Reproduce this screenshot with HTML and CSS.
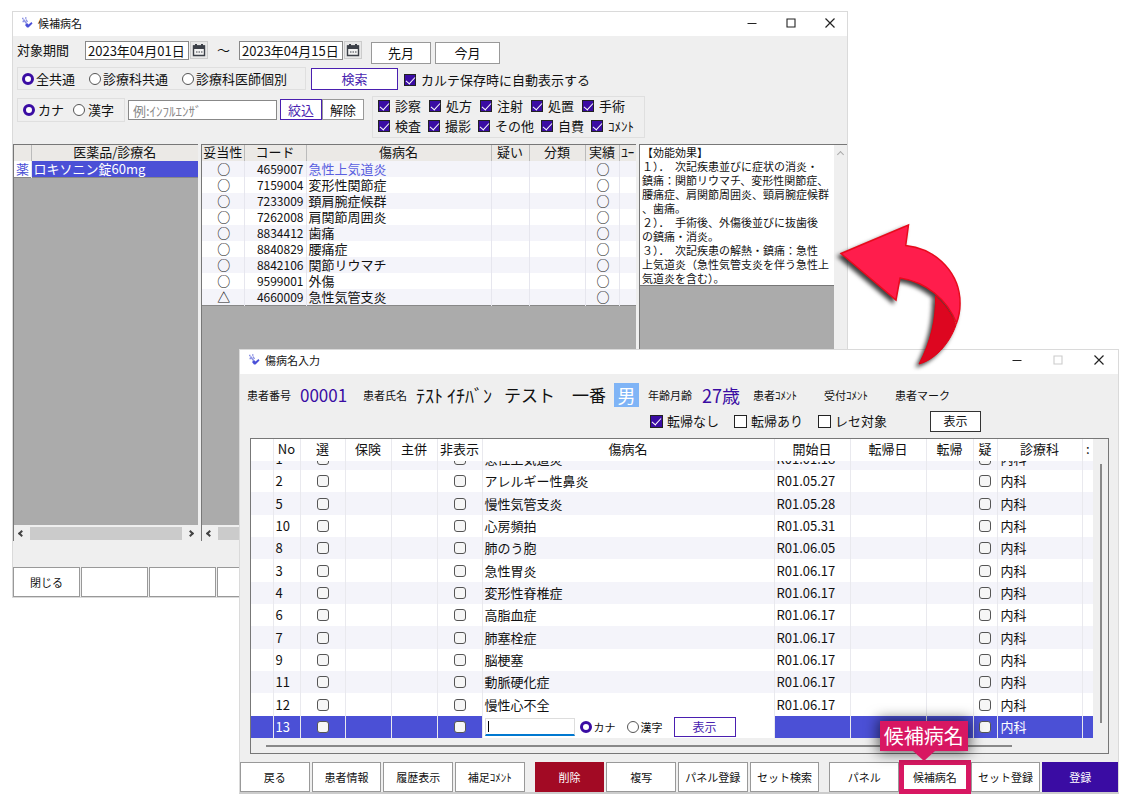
FILE: index.html
```html
<!DOCTYPE html>
<html lang="ja">
<head>
<meta charset="utf-8">
<meta name="viewport" content="width=device-width, initial-scale=1">
<title>候補病名</title>
<link rel="stylesheet" href="styles.css">
</head>
<body>
<svg class="defs" aria-hidden="true">
  <symbol id="app" viewBox="0 0 12 12"><path d="M1 1.500h1.500M4 1h1.500M1.500 4.500h1.500M2.500 2.500l3 4M5 2.500l1.500 2.500" stroke="#8c92e4" stroke-width="1.400" fill="none"/><path d="M4 8l2-2 1.500 1.500L10.500 5 11.500 6.500 7.500 10.500 6 10.500z" fill="#4a50d8"/></symbol>
  <symbol id="cal" viewBox="0 0 14 14"><path d="M1.500 3h11v9.500h-11z" fill="#f2f2f2" stroke="#3c4048" stroke-width="1.400"/><path d="M1 2.500h12V6H1zM3 1h2v2H3zM9 1h2v2H9z" fill="#3c4048"/><path d="M4 9h1.500M6.500 9H8M9 9h1.500" stroke="#3c4048" stroke-width="1.200"/></symbol>
  <symbol id="min" viewBox="0 0 10 10"><path d="M0.500 5.500h9" stroke="currentColor"/></symbol>
  <symbol id="max" viewBox="0 0 10 10"><path d="M1 1h8v8H1z" fill="none" stroke="currentColor" stroke-width="1.100"/></symbol>
  <symbol id="close" viewBox="0 0 10 10"><path d="M0.500 0.500l9 9M9.500 0.500l-9 9" stroke="currentColor" stroke-width="1.200"/></symbol>
</svg>

<main class="desktop">
  <section class="window candidates">
    <header class="titlebar">
      <svg class="app-icon"><use href="#app"/></svg>
      <h1>候補病名</h1>
      <button class="win-btn" aria-label="最小化"><svg><use href="#min"/></svg></button>
      <button class="win-btn" aria-label="最大化"><svg><use href="#max"/></svg></button>
      <button class="win-btn" aria-label="閉じる"><svg><use href="#close"/></svg></button>
    </header>

    <form class="filters">
      <div class="line period">
        <label for="from">対象期間</label>
        <input class="field date" id="from" type="text" value="2023年04月01日">
        <button class="cal" type="button" aria-label="開始日を選択"><svg><use href="#cal"/></svg></button>
        <span class="tilde">～</span>
        <input class="field date" type="text" value="2023年04月15日" aria-label="終了日">
        <button class="cal" type="button" aria-label="終了日を選択"><svg><use href="#cal"/></svg></button>
        <button class="btn month first" type="button">先月</button>
        <button class="btn month" type="button">今月</button>
      </div>
      <div class="line scope">
        <div class="group scope-group">
          <label><input type="radio" name="scope" checked>全共通</label>
          <label><input type="radio" name="scope">診療科共通</label>
          <label><input type="radio" name="scope">診療科医師個別</label>
        </div>
        <button class="btn accent search" type="button">検索</button>
        <label><input type="checkbox" checked>カルテ保存時に自動表示する</label>
      </div>
      <div class="line narrow">
        <div class="group kana-group">
          <label><input type="radio" name="kana" checked>カナ</label>
          <label><input type="radio" name="kana">漢字</label>
        </div>
        <input class="field keyword" type="text" placeholder="例:ｲﾝﾌﾙｴﾝｻﾞ" aria-label="キーワード">
        <button class="btn accent small" type="button">絞込</button>
        <button class="btn small" type="button">解除</button>
        <div class="group kinds">
          <div class="kinds-row">
            <label><input type="checkbox" checked>診察</label>
            <label><input type="checkbox" checked>処方</label>
            <label><input type="checkbox" checked>注射</label>
            <label><input type="checkbox" checked>処置</label>
            <label><input type="checkbox" checked>手術</label>
          </div>
          <div class="kinds-row">
            <label><input type="checkbox" checked>検査</label>
            <label><input type="checkbox" checked>撮影</label>
            <label><input type="checkbox" checked>その他</label>
            <label><input type="checkbox" checked>自費</label>
            <label><input type="checkbox" checked>ｺﾒﾝﾄ</label>
          </div>
        </div>
      </div>
    </form>

    <div class="panes">
      <div class="pane drugs">
        <table class="list">
          <colgroup><col class="w-mark"><col></colgroup>
          <thead><tr><th></th><th>医薬品/診療名</th></tr></thead>
          <tbody><tr class="picked"><td class="mark">薬</td><td>ロキソニン錠60mg</td></tr></tbody>
        </table>
        <div class="hbar"><span class="chev left"></span><span class="thumb"></span><span class="chev right"></span></div>
      </div>
      <div class="pane names">
        <table class="list">
          <colgroup><col class="w-fit"><col class="w-code"><col><col class="w-doubt"><col class="w-class"><col class="w-done"><col class="w-user"></colgroup>
          <thead><tr><th>妥当性</th><th>コード</th><th>傷病名</th><th>疑い</th><th>分類</th><th>実績</th><th class="cut">ﾕｰ</th></tr></thead>
          <tbody>
            <tr><td>○</td><td>4659007</td><td class="link">急性上気道炎</td><td></td><td></td><td>○</td><td></td></tr>
            <tr><td>○</td><td>7159004</td><td>変形性関節症</td><td></td><td></td><td>○</td><td></td></tr>
            <tr><td>○</td><td>7233009</td><td>頚肩腕症候群</td><td></td><td></td><td>○</td><td></td></tr>
            <tr><td>○</td><td>7262008</td><td>肩関節周囲炎</td><td></td><td></td><td>○</td><td></td></tr>
            <tr><td>○</td><td>8834412</td><td>歯痛</td><td></td><td></td><td>○</td><td></td></tr>
            <tr><td>○</td><td>8840829</td><td>腰痛症</td><td></td><td></td><td>○</td><td></td></tr>
            <tr><td>○</td><td>8842106</td><td>関節リウマチ</td><td></td><td></td><td>○</td><td></td></tr>
            <tr><td>○</td><td>9599001</td><td>外傷</td><td></td><td></td><td>○</td><td></td></tr>
            <tr><td>△</td><td>4660009</td><td>急性気管支炎</td><td></td><td></td><td>○</td><td></td></tr>
          </tbody>
        </table>
        <div class="hbar"><span class="chev left"></span><span class="thumb"></span><span class="chev right"></span></div>
      </div>
      <div class="pane effects">
        <div class="effects-body">
          <p>【効能効果】<br>１）．　次記疾患並びに症状の消炎・<br>鎮痛：関節リウマチ、変形性関節症、<br>腰痛症、肩関節周囲炎、頸肩腕症候群<br>、歯痛。<br>２）．　手術後、外傷後並びに抜歯後<br>の鎮痛・消炎。<br>３）．　次記疾患の解熱・鎮痛：急性<br>上気道炎（急性気管支炎を伴う急性上<br>気道炎を含む）。</p>
        </div>
        <div class="vbar"><span class="chev up"></span></div>
      </div>
    </div>

    <footer class="actions back">
      <button class="btn">閉じる</button>
      <button class="btn" aria-label="未設定1"></button>
      <button class="btn" aria-label="未設定2"></button>
      <button class="btn" aria-label="未設定3"></button>
    </footer>
  </section>

  <section class="window entry">
    <header class="titlebar">
      <svg class="app-icon"><use href="#app"/></svg>
      <h1>傷病名入力</h1>
      <button class="win-btn" aria-label="最小化"><svg><use href="#min"/></svg></button>
      <button class="win-btn" aria-label="最大化" disabled><svg><use href="#max"/></svg></button>
      <button class="win-btn" aria-label="閉じる"><svg><use href="#close"/></svg></button>
    </header>

    <div class="patient">
      <span>患者番号</span><strong class="number">00001</strong>
      <span>患者氏名</span><span class="name kana">ﾃｽﾄ ｲﾁﾊﾞﾝ</span><span class="name">テスト　一番</span>
      <span class="sex">男</span>
      <span>年齢月齢</span><strong class="age">27歳</strong>
      <span class="note">患者ｺﾒﾝﾄ</span><span class="note">受付ｺﾒﾝﾄ</span><span class="note">患者マーク</span>
    </div>
    <div class="outcome">
      <label><input type="checkbox" checked>転帰なし</label>
      <label><input type="checkbox">転帰あり</label>
      <label><input type="checkbox">レセ対象</label>
      <button class="btn show">表示</button>
    </div>

    <div class="grid-frame">
      <div class="grid-main">
        <table class="grid">
          <colgroup><col class="c-edge"><col class="c-no"><col class="c-box"><col class="c-mid"><col class="c-mid"><col class="c-box"><col><col class="c-date"><col class="c-date"><col class="c-end"><col class="c-doubt"><col class="c-dept"><col class="c-last"></colgroup>
          <thead><tr><th></th><th>No</th><th>選</th><th>保険</th><th>主併</th><th>非表示</th><th>傷病名</th><th>開始日</th><th>転帰日</th><th>転帰</th><th>疑</th><th>診療科</th><th>:</th></tr></thead>
        </table>
        <div class="grid-rows">
          <table class="grid">
            <colgroup><col class="c-edge"><col class="c-no"><col class="c-box"><col class="c-mid"><col class="c-mid"><col class="c-box"><col><col class="c-date"><col class="c-date"><col class="c-end"><col class="c-doubt"><col class="c-dept"><col class="c-last"></colgroup>
            <tbody>
              <tr><td></td><td>1</td><td><input type="checkbox" aria-label="選"></td><td></td><td></td><td><input type="checkbox" aria-label="非表示"></td><td>急性上気道炎</td><td>R01.01.18</td><td></td><td></td><td><input type="checkbox" aria-label="疑"></td><td>内科</td><td></td></tr>
              <tr><td></td><td>2</td><td><input type="checkbox" aria-label="選"></td><td></td><td></td><td><input type="checkbox" aria-label="非表示"></td><td>アレルギー性鼻炎</td><td>R01.05.27</td><td></td><td></td><td><input type="checkbox" aria-label="疑"></td><td>内科</td><td></td></tr>
              <tr><td></td><td>5</td><td><input type="checkbox" aria-label="選"></td><td></td><td></td><td><input type="checkbox" aria-label="非表示"></td><td>慢性気管支炎</td><td>R01.05.28</td><td></td><td></td><td><input type="checkbox" aria-label="疑"></td><td>内科</td><td></td></tr>
              <tr><td></td><td>10</td><td><input type="checkbox" aria-label="選"></td><td></td><td></td><td><input type="checkbox" aria-label="非表示"></td><td>心房頻拍</td><td>R01.05.31</td><td></td><td></td><td><input type="checkbox" aria-label="疑"></td><td>内科</td><td></td></tr>
              <tr><td></td><td>8</td><td><input type="checkbox" aria-label="選"></td><td></td><td></td><td><input type="checkbox" aria-label="非表示"></td><td>肺のう胞</td><td>R01.06.05</td><td></td><td></td><td><input type="checkbox" aria-label="疑"></td><td>内科</td><td></td></tr>
              <tr><td></td><td>3</td><td><input type="checkbox" aria-label="選"></td><td></td><td></td><td><input type="checkbox" aria-label="非表示"></td><td>急性胃炎</td><td>R01.06.17</td><td></td><td></td><td><input type="checkbox" aria-label="疑"></td><td>内科</td><td></td></tr>
              <tr><td></td><td>4</td><td><input type="checkbox" aria-label="選"></td><td></td><td></td><td><input type="checkbox" aria-label="非表示"></td><td>変形性脊椎症</td><td>R01.06.17</td><td></td><td></td><td><input type="checkbox" aria-label="疑"></td><td>内科</td><td></td></tr>
              <tr><td></td><td>6</td><td><input type="checkbox" aria-label="選"></td><td></td><td></td><td><input type="checkbox" aria-label="非表示"></td><td>高脂血症</td><td>R01.06.17</td><td></td><td></td><td><input type="checkbox" aria-label="疑"></td><td>内科</td><td></td></tr>
              <tr><td></td><td>7</td><td><input type="checkbox" aria-label="選"></td><td></td><td></td><td><input type="checkbox" aria-label="非表示"></td><td>肺塞栓症</td><td>R01.06.17</td><td></td><td></td><td><input type="checkbox" aria-label="疑"></td><td>内科</td><td></td></tr>
              <tr><td></td><td>9</td><td><input type="checkbox" aria-label="選"></td><td></td><td></td><td><input type="checkbox" aria-label="非表示"></td><td>脳梗塞</td><td>R01.06.17</td><td></td><td></td><td><input type="checkbox" aria-label="疑"></td><td>内科</td><td></td></tr>
              <tr><td></td><td>11</td><td><input type="checkbox" aria-label="選"></td><td></td><td></td><td><input type="checkbox" aria-label="非表示"></td><td>動脈硬化症</td><td>R01.06.17</td><td></td><td></td><td><input type="checkbox" aria-label="疑"></td><td>内科</td><td></td></tr>
              <tr><td></td><td>12</td><td><input type="checkbox" aria-label="選"></td><td></td><td></td><td><input type="checkbox" aria-label="非表示"></td><td>慢性心不全</td><td>R01.06.17</td><td></td><td></td><td><input type="checkbox" aria-label="疑"></td><td>内科</td><td></td></tr>
              <tr class="current"><td></td><td>13</td><td><input type="checkbox" aria-label="選"></td><td></td><td></td><td><input type="checkbox" aria-label="非表示"></td>
                <td class="editor"><div class="edit-line">
                  <span class="edit-box"><span class="caret"></span><input type="text" aria-label="傷病名"></span>
                  <label><input type="radio" name="edit" checked>カナ</label>
                  <label><input type="radio" name="edit">漢字</label>
                  <button class="btn accent">表示</button>
                </div></td>
                <td></td><td></td><td></td><td><input type="checkbox" aria-label="疑"></td><td>内科</td><td></td></tr>
            </tbody>
          </table>
        </div>
      </div>
      <div class="grid-vbar"><span></span></div>
      <div class="grid-hbar"><span></span></div>
    </div>

    <footer class="actions front">
      <button class="btn">戻る</button>
      <button class="btn">患者情報</button>
      <button class="btn">履歴表示</button>
      <button class="btn">補足ｺﾒﾝﾄ</button>
      <button class="btn danger apart">削除</button>
      <button class="btn">複写</button>
      <button class="btn">パネル登録</button>
      <button class="btn">セット検索</button>
      <button class="btn apart">パネル</button>
      <button class="btn marked">候補病名<span class="callout">候補病名</span></button>
      <button class="btn">セット登録</button>
      <button class="btn primary">登録</button>
    </footer>
  </section>

  <svg class="arrow" viewBox="0 0 150 160" aria-hidden="true">
    <path d="M105.500 81C113 88 120 96 126 110C119 130 104 145 89 149C101 126 106 104 105.500 81Z" fill="#dd0620" stroke="#e60012"/>
    <path d="M11 38.500L78.500 10L75.700 30.500C108 34 131 60 130 90C130 98 128 104 126.500 108C117 84 96 67 70 63L66 85Z" fill="#ff1d4c" stroke="#e80a1c" stroke-width="1.500"/>
  </svg>
</main>
</body>
</html>
```
FILE: styles.css
```css
* { box-sizing: border-box; }

body {
  margin: 0;
  background: #fff;
  color: #111;
  font: 13px/16px "Noto Sans CJK JP", sans-serif;
}

button, input { font: inherit; color: inherit; margin: 0; }
.defs { position: absolute; width: 0; height: 0; }

.desktop { position: relative; min-height: 805px; overflow: hidden; }

/* windows */
.window {
  position: absolute;
  display: flex;
  flex-direction: column;
  background: #efefef;
  border: 1px solid #dadada;
}
.candidates { left: 12px; right: 282px; top: 11px; }
.entry { left: 239px; right: 11px; top: 349px; border-bottom: 2px solid #ccc; }

.titlebar {
  display: flex;
  align-items: center;
  height: 24px;
  padding: 0 12px 2px 8px;
  background: #fff;
}
.titlebar h1 { flex: 1; margin: 0 0 0 5px; font-size: 11px; font-weight: 400; line-height: 16px; }
.app-icon { width: 12px; height: 12px; }
.win-btn {
  width: 10px;
  height: 10px;
  margin-left: 29px;
  padding: 0;
  border: 0;
  background: none;
  color: #222;
}
.win-btn svg { display: block; width: 10px; height: 10px; }
.win-btn:disabled { color: #ccc; }
.entry .win-btn { margin-left: 31px; }
.entry .titlebar { padding-right: 14px; padding-bottom: 4px; }

/* controls */
.btn {
  padding: 0;
  border: 1px solid #999;
  background: #fff;
  white-space: nowrap;
}
.btn.accent { border-color: #4a1fb0; color: #4a1fb0; }
.field { height: 19px; padding: 0 2px; border: 1px solid #888; background: #fff; }
.field::placeholder { color: #888; opacity: 1; }

label { display: flex; align-items: center; gap: 4px; white-space: nowrap; }

input[type="checkbox"] {
  appearance: none;
  display: block;
  flex: none;
  width: 12px;
  height: 12px;
  border: 1px solid #222;
  background: #fff;
}
input[type="checkbox"]:checked { background: #3a0ca3; }
input[type="checkbox"]:checked::before {
  content: "";
  display: block;
  width: 4px;
  height: 8px;
  margin: 0 0 0 3px;
  border: solid #fff;
  border-width: 0 1px 1px 0;
  transform: rotate(42deg);
}
input[type="radio"] {
  appearance: none;
  flex: none;
  width: 12px;
  height: 12px;
  border: 1px solid #555;
  border-radius: 50%;
  background: #fff;
}
input[type="radio"]:checked { border: 3px solid #3a0ca3; }

/* filters */
.filters { display: flex; flex-direction: column; padding: 5px 4px 6px; }
.line { display: flex; align-items: flex-start; }
.group { display: flex; border: 1px solid #dfdfdf; }

.period { height: 26px; }
.period > label { width: 68px; height: 18px; }
.date { width: 104px; }
.cal { width: 18px; height: 18px; margin-left: 1px; padding: 1px; border: 1px solid #ccc; background: #e8e8e8; }
.cal svg { display: block; width: 14px; height: 14px; }
.tilde { width: 31px; line-height: 18px; text-align: center; }
.month { width: 60px; height: 22px; margin-top: 1px; }
.month.first { margin-left: 9px; margin-right: 4px; }
.month:last-child { width: 65px; }

.scope { height: 29px; }
.scope-group { height: 23px; width: 289px; padding: 0 4px; gap: 14px; }
.scope-group label { gap: 2px; }
.search { width: 87px; height: 22px; margin: 1px 6px 0 5px; }
.scope > label { height: 25px; gap: 5px; }

.kana-group { width: 108px; height: 24px; margin: 2px 3px 0 0; padding: 0 5px; gap: 9px; }
.kana-group label { gap: 3px; }
.keyword { width: 149px; height: 20px; margin: 4px 3px 0 0; padding: 0 4px; }
.small { width: 42px; height: 21px; margin: 3px 0 0; }
.kinds { flex-direction: column; gap: 4px; width: 273px; margin-left: 8px; padding: 1px 5px 3px; }
.kinds-row { display: flex; gap: 8px; }
.kinds-row + .kinds-row { gap: 7px; }
.kinds label { gap: 5px; }

/* list panes */
.panes { display: flex; gap: 3px; }
.pane {
  display: flex;
  min-width: 0;
  min-height: 397px;
  border-top: 1px solid #777;
  border-left: 1px solid #777;
  background: #ababab;
}
.drugs { flex: 0 0 185px; flex-direction: column; }
.names { flex: 1; flex-direction: column; }
.effects { flex: 0 0 208px; }

.list { width: 100%; table-layout: fixed; border-collapse: collapse; border-bottom: 1px solid #888; }
.list th {
  height: 16px;
  padding: 0 0 2px;
  border-right: 1px solid #bbb;
  background: #ebe9e6;
  font-weight: 400;
  line-height: 14px;
  white-space: nowrap;
}
.list td {
  height: 16px;
  padding: 0 2px;
  border-right: 1px solid #e6e6ee;
  background: #fff;
  line-height: 16px;
  white-space: nowrap;
}
.list tr > :last-child { border-right: 0; }
.list .cut { overflow: hidden; }
.names td:nth-child(1), .names td:nth-child(6) { padding-right: 0; font-weight: 500; text-align: center; }
.names td:nth-child(2) { font-size: 12px; text-align: right; }
.names tr:nth-child(odd) td { background: #f4f4fa; }
.names .link { color: #5a5fe0; }
.list .picked td { background: #4b50d6; color: #fff; }
.list .picked .mark { background: #fff; color: #4b50d6; }
.w-mark { width: 17px; }
.w-fit { width: 42px; }
.w-code { width: 62px; }
.w-doubt { width: 38px; }
.w-class { width: 56px; }
.w-done { width: 34px; }
.w-user { width: 17px; }

.hbar { display: flex; align-items: center; height: 16px; margin-top: auto; padding: 0 5px; gap: 6px; background: #efefef; }
.hbar .thumb { flex: 1; height: 13px; background: #cbcbcb; }
.chev { width: 5px; height: 5px; border: solid #444; border-width: 2px 0 0 2px; }
.chev.left { transform: rotate(-45deg); }
.chev.right { transform: rotate(135deg); }
.chev.up { border-color: #aaa; border-width: 1px 0 0 1px; transform: rotate(45deg); }
.effects-body { flex: 1; }
.effects p { margin: 0; padding: 0 0 0 2px; background: #fff; border-bottom: 1px solid #777; font-size: 11px; line-height: 14px; white-space: nowrap; }
.vbar { display: flex; justify-content: center; width: 13px; padding-top: 7px; background: #efefef; }

/* button rows */
.actions { display: flex; gap: 2px; font-size: 11px; }
.back { gap: 1px; margin-top: 26px; }
.back .btn { width: 67px; height: 30px; }
.front { padding: 8px 0 0; }
.front .btn { flex: 1 1 0; height: 30px; }
.front .apart { margin-left: 8px; }
.front .danger { border-color: #a20a24; background: #a20a24; color: #fff; }
.front .primary { flex-basis: 8px; border-color: #3a0ca3; background: #3a0ca3; color: #fff; }
.front .marked { position: relative; border: 0; box-shadow: 0 0 0 2px #d81762, inset 0 0 0 3px #d81762; }
.callout {
  position: absolute;
  right: 1px;
  bottom: 41px;
  width: 88px;
  background: #d81762;
  color: #fff;
  font-size: 20px;
  line-height: 30px;
  box-shadow: 0 0 14px 2px rgba(0, 0, 0, 0.6);
}
.callout::after {
  content: "";
  position: absolute;
  top: 100%;
  left: 33px;
  border: solid transparent;
  border-width: 10px 11px 0;
  border-top-color: #d81762;
}

/* patient summary */
.patient { display: flex; align-items: center; height: 37px; padding: 5px 0 0 7px; font-size: 11px; white-space: nowrap; }
.patient strong { font-weight: 400; color: #3a0ca3; }
.number { width: 72px; padding-left: 9px; font-size: 17px; }
.name { font-size: 17px; line-height: 24px; }
.name.kana { width: 97px; padding-left: 9px; font-size: 18px; }
.sex { width: 25px; margin: 0 9px 0 8px; background: #7fb4f6; color: #fff; font-size: 18px; line-height: 24px; text-align: center; }
.age { width: 61px; padding-left: 10px; font-size: 18px; }
.note { width: 71px; }

.outcome { display: flex; align-items: center; height: 20px; margin-bottom: 7px; padding-left: 410px; gap: 15px; }
.outcome .show { width: 51px; height: 21px; margin-left: 28px; border-color: #333; font-size: 12px; }
.outcome input { width: 13px; height: 13px; }

/* disease grid */
.grid-frame {
  display: grid;
  grid-template-columns: 1fr 15px;
  margin: 0 9px 0 10px;
  border: 1px solid #777;
}
.grid-main { min-width: 0; }
.grid { width: 100%; table-layout: fixed; border-collapse: collapse; }
.grid th { height: 22px; padding: 0 0 2px; border-right: 1px solid #e9e9ee; background: #fff; font-weight: 400; line-height: 20px; white-space: nowrap; }
.grid td { height: 22px; padding: 0 2px; border-right: 1px solid #e9e9ee; background: #fff; line-height: 20px; white-space: nowrap; }
.grid tr:nth-child(3n) td { height: 23px; }
.grid tr:nth-child(odd) td { background: #f4f4fa; }
.grid tr > :last-child { border-right: 0; }
.grid td:nth-child(12) { padding-left: 3px; }
.grid td input[type="checkbox"] { width: 12px; height: 12px; margin: 0 auto; border-color: #555; border-radius: 3px; background: #f6f6f6; }
.grid tr.current td { background: #4b50d6; color: #fff; }
.grid tr.current td.editor { background: #fff; color: #111; }
.grid-rows { display: flex; align-items: flex-end; height: 277px; overflow: hidden; }
.c-edge { width: 22px; }
.c-no { width: 27px; }
.c-box { width: 45px; }
.c-mid { width: 46px; }
.c-date { width: 76px; }
.c-end { width: 47px; }
.c-doubt { width: 24px; }
.c-dept { width: 85px; }
.c-last { width: 11px; }

.edit-line { display: flex; align-items: center; gap: 5px; height: 20px; font-size: 11px; }
.edit-line label { gap: 2px; margin-right: 6px; }
.edit-line .btn { width: 62px; height: 20px; font-size: 12px; line-height: 14px; }
.edit-box { display: flex; align-items: center; width: 90px; height: 18px; border: 1px solid #ddd; border-bottom: 2px solid #0078d0; }
.edit-box input { width: 100%; min-width: 0; padding: 0; border: 0; background: none; }
.caret { flex: none; width: 1px; height: 11px; margin-left: 2px; background: #000; }

.grid-vbar { display: flex; justify-content: center; padding: 25px 0 15px; }
.grid-vbar span { width: 2px; background: #888; }
.grid-hbar { display: flex; align-items: center; grid-column: 1 / -1; height: 15px; padding: 0 96px 0 15px; }
.grid-hbar span { flex: 1; height: 2px; background: #888; }

.arrow {
  position: absolute;
  top: 215px;
  right: 150px;
  width: 150px;
  height: 160px;
  filter: drop-shadow(-3px 3px 2px rgba(0, 0, 0, 0.75));
}
```
